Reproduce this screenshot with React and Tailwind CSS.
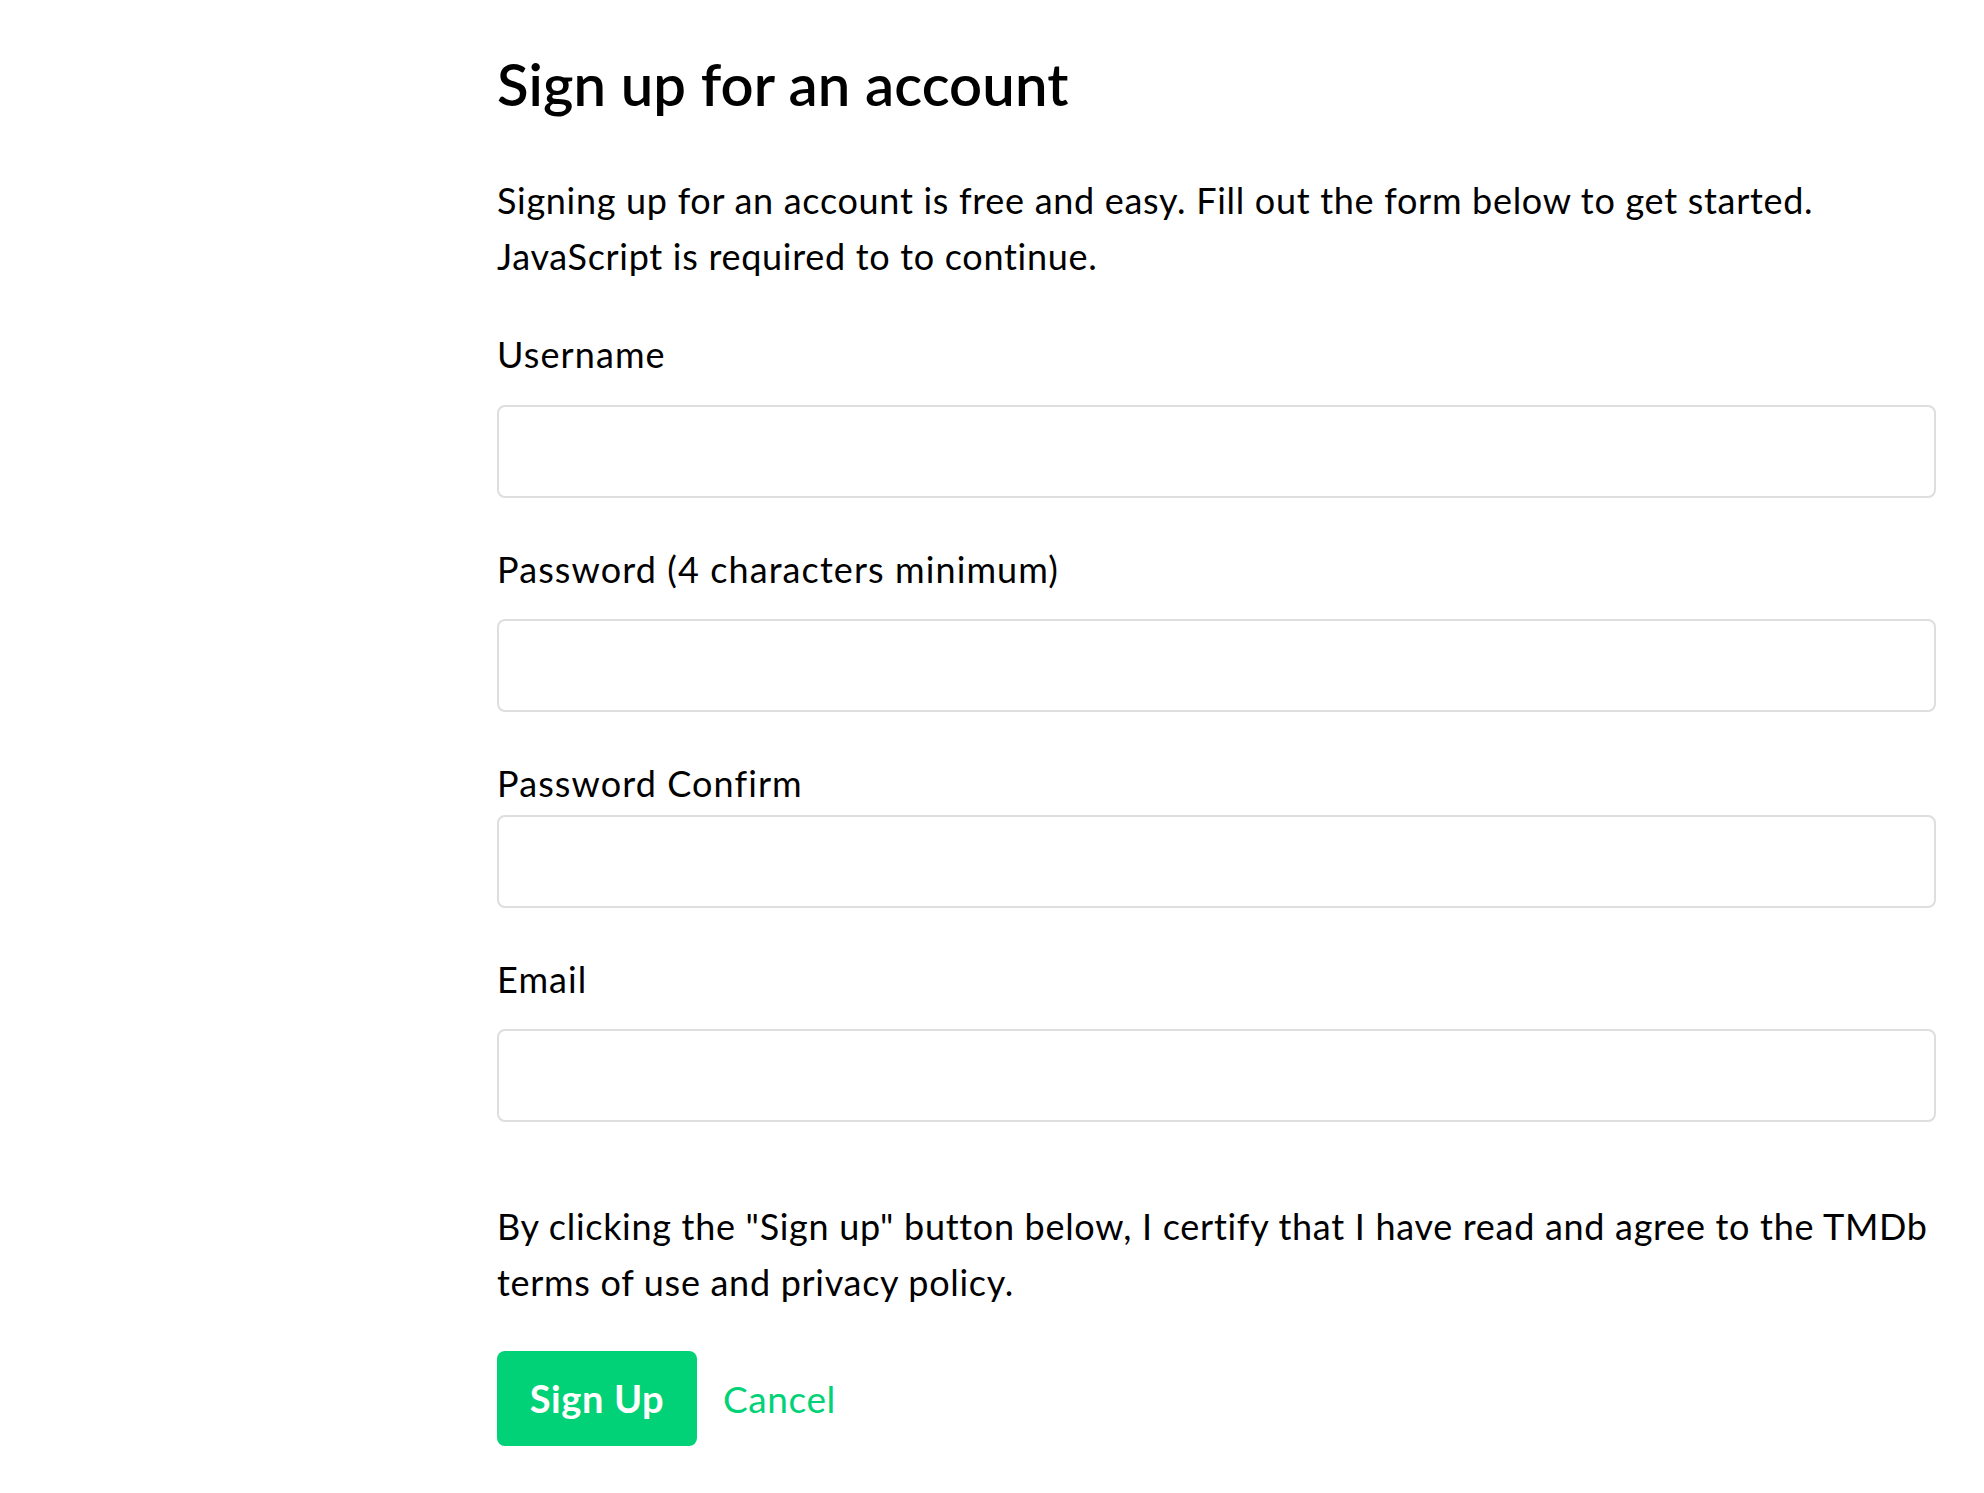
export default function App() {
	const fields = [
		{ label: 'Username', type: 'text', gap: 'mb-[31px]' },
		{ label: 'Password (4 characters minimum)', type: 'password', gap: 'mb-[30px]' },
		{ label: 'Password Confirm', type: 'password', gap: 'mb-[12px]' },
		{ label: 'Email', type: 'email', gap: 'mb-[30px]' },
	];

	return (
		<div className="min-h-screen bg-white font-['Lato','Noto_Sans',sans-serif] text-black">
			<div className="ml-[497px] mr-[48px] pt-[49px] pb-[40px]">
				<h1 className="text-[58px] font-semibold leading-[70px] tracking-[0.1px]">Sign up for an account</h1>

				<p className="mt-[53px] text-[36px] leading-[56px] tracking-[0.7px]">
					Signing up for an account is free and easy. Fill out the form below to get started.
					<br />
					JavaScript is required to to continue.
				</p>

				<form className="mt-[50px]" onSubmit={(event) => event.preventDefault()}>
					{fields.map((field, index) => (
						<div key={field.label} className={index > 0 ? 'mt-[51px]' : ''}>
							<label className={`block text-[36px] leading-[40px] tracking-[1.1px] ${field.gap}`}>{field.label}</label>
							<input
								type={field.type}
								className="block h-[93px] w-full rounded-[8px] border-2 border-[#dedede] bg-white px-4 text-[35px] outline-none"
							/>
						</div>
					))}

					<p className="mt-[76px] text-[36px] leading-[56px] tracking-[0.7px]">
						By clicking the "Sign up" button below, I certify that I have read and agree to the TMDb
						<br />
						terms of use and privacy policy.
					</p>

					<div className="mt-[41px] flex items-center gap-[26px]">
						<button
							type="submit"
							className="h-[95px] w-[200px] rounded-[8px] bg-[#01d277] text-[38px] font-bold tracking-[0.6px] text-white"
						>
							Sign Up
						</button>
						<a href="#" className="text-[37px] tracking-[0.6px] text-[#01d277]">
							Cancel
						</a>
					</div>
				</form>
			</div>
		</div>
	);
}
